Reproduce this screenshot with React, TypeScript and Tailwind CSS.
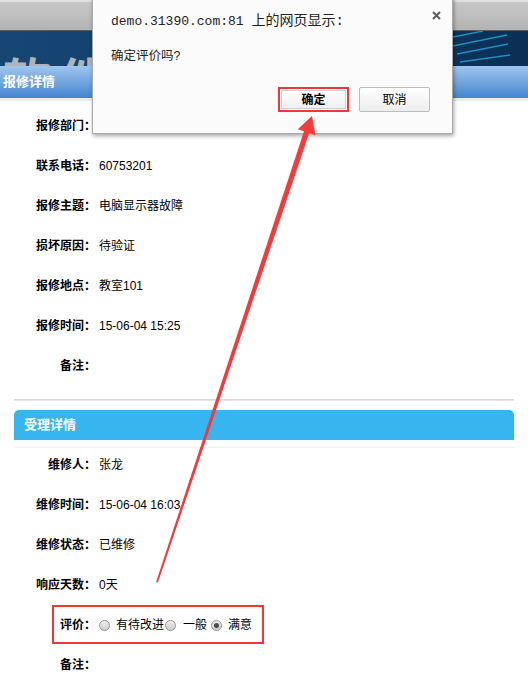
import React from 'react';

const info: [string, string][] = [
  ['报修部门：', ''],
  ['联系电话：', '60753201'],
  ['报修主题：', '电脑显示器故障'],
  ['损坏原因：', '待验证'],
  ['报修地点：', '教室101'],
  ['报修时间：', '15-06-04 15:25'],
  ['备注：', ''],
];

const handle: [string, string][] = [
  ['维修人：', '张龙'],
  ['维修时间：', '15-06-04 16:03'],
  ['维修状态：', '已维修'],
  ['响应天数：', '0天'],
];

const Row: React.FC<{ label: string; children?: React.ReactNode }> = ({ label, children }) => (
  <div className="flex h-10 items-center">
    <div className="w-[96px] shrink-0 text-right font-bold">{label}</div>
    <div className="flex items-center pl-[3px]">{children}</div>
  </div>
);

const Radio: React.FC<{ checked?: boolean }> = ({ checked }) => (
  <span className="flex h-[11px] w-[11px] shrink-0 items-center justify-center rounded-full border border-[#939393] bg-gradient-to-b from-[#f0f0f0] to-[#cdcdcd]">
    {checked && <span className="h-[5px] w-[5px] rounded-full bg-[#4a4a4a]" />}
  </span>
);

const App: React.FC = () => {
  return (
    <div className="relative h-[699px] w-[528px] overflow-hidden bg-white font-['Liberation_Sans','Noto_Sans_CJK_SC',sans-serif] text-[12px] text-black">
      {/* top bar */}
      <div className="h-[31px] border-t-2 border-b border-t-[#e0e0e0] border-b-[#5e5e5e] bg-gradient-to-b from-[#c8c8c8] to-[#b3b3b3]" />

      {/* banner */}
      <div className="relative h-[35px] overflow-hidden bg-gradient-to-r from-[#174674] via-[#0f3d69] to-[#0b2f55]">
        <span className="absolute left-[3px] top-[22px] font-['Noto_Sans_CJK_SC',sans-serif] text-[48px] font-bold leading-none tracking-[8px] text-[#b0b4ba]">
          软件
        </span>
        <svg className="absolute left-[440px] top-0" width="88" height="35" viewBox="0 0 88 35">
          <g stroke="#1f9ccc" strokeWidth="1.3" opacity="0.9">
            <line x1="13" y1="6" x2="43" y2="0" />
            <line x1="13" y1="15" x2="67" y2="4" />
            <line x1="17" y1="23" x2="68" y2="13" />
            <line x1="20" y1="31" x2="70" y2="24" />
          </g>
        </svg>
      </div>

      {/* section header */}
      <div className="flex h-[32px] items-center bg-gradient-to-b from-[#9fc6ee] to-[#4584cf] pl-[3px] text-[13px] font-bold text-white">
        报修详情
      </div>
      <div className="h-[3px] bg-[#ececec]" />

      <div className="pt-[5px]">
        {info.map(([l, v]) => (
          <Row key={l} label={l}>
            {v}
          </Row>
        ))}
      </div>

      <div className="mx-[14px] mt-[13px] h-[2px] bg-gradient-to-b from-[#d2d2d2] to-[#ececec]" />

      <div className="mx-[14px] mt-[9px] flex h-[30px] items-center rounded-t-[5px] bg-[#37b5ef] pl-[10px] text-[13px] font-bold text-white">
        受理详情
      </div>
      <div className="mx-[14px] mt-[7px] h-px bg-[#f1f1f1]" />

      <div className="-mt-[3px]">
        {handle.map(([l, v]) => (
          <Row key={l} label={l}>
            {v}
          </Row>
        ))}
        <Row label="评价：">
          <Radio />
          <span className="ml-[6px] mr-[1px]">有待改进</span>
          <Radio />
          <span className="ml-[7px] mr-[4px]">一般</span>
          <Radio checked />
          <span className="ml-[6px]">满意</span>
        </Row>
        <Row label="备注：" />
      </div>

      {/* annotation box */}
      <div className="absolute left-[52px] top-[605px] h-[39px] w-[212px] border-2 border-[#f23535]" />

      {/* alert dialog */}
      <div className="absolute left-[92px] top-[-10px] flex h-[144px] w-[361px] flex-col border border-[#a9a9a9] bg-[#fbfbfb] px-[18px] pt-[21px] shadow-[1px_2px_4px_rgba(0,0,0,0.35)]">
        <div className="h-[18px] font-['Liberation_Mono','Noto_Sans_CJK_SC',monospace] text-[13px] leading-[18px] text-[#222]">
          demo.31390.com:81 <span className="text-[14px]">上的网页显示:</span>
        </div>
        <div className="mt-[18px] h-[16px] text-[12.5px] leading-[16px] text-[#222]">确定评价吗?</div>
        <div className="mt-[23px] mr-[4px] flex justify-end gap-[10px]">
          <button className="h-[25px] w-[71px] border-2 border-[#f23535] bg-white p-[1px]">
            <span className="flex h-full w-full items-center justify-center border border-[#d0d0d0] bg-gradient-to-b from-white to-[#efefef] font-bold">
              确定
            </span>
          </button>
          <button className="flex h-[25px] w-[71px] items-center justify-center rounded-[2px] border border-[#bdbdbd] bg-gradient-to-b from-white to-[#ededed]">
            取消
          </button>
        </div>
        <svg className="absolute right-[11px] top-[20px]" width="9" height="9" viewBox="0 0 9 9">
          <path d="M1 1 L8 8 M8 1 L1 8" stroke="#5c5c5c" strokeWidth="2" />
        </svg>
      </div>

      {/* red arrow */}
      <svg className="pointer-events-none absolute left-0 top-0" width="528" height="699" viewBox="0 0 528 699">
        <polygon
          points="312,116 315.5,135.2 309.2,133 157.9,582.6 156.1,582 304,131.2 297.8,129.3"
          fill="#f23c3c"
        />
      </svg>
    </div>
  );
};

export default App;
